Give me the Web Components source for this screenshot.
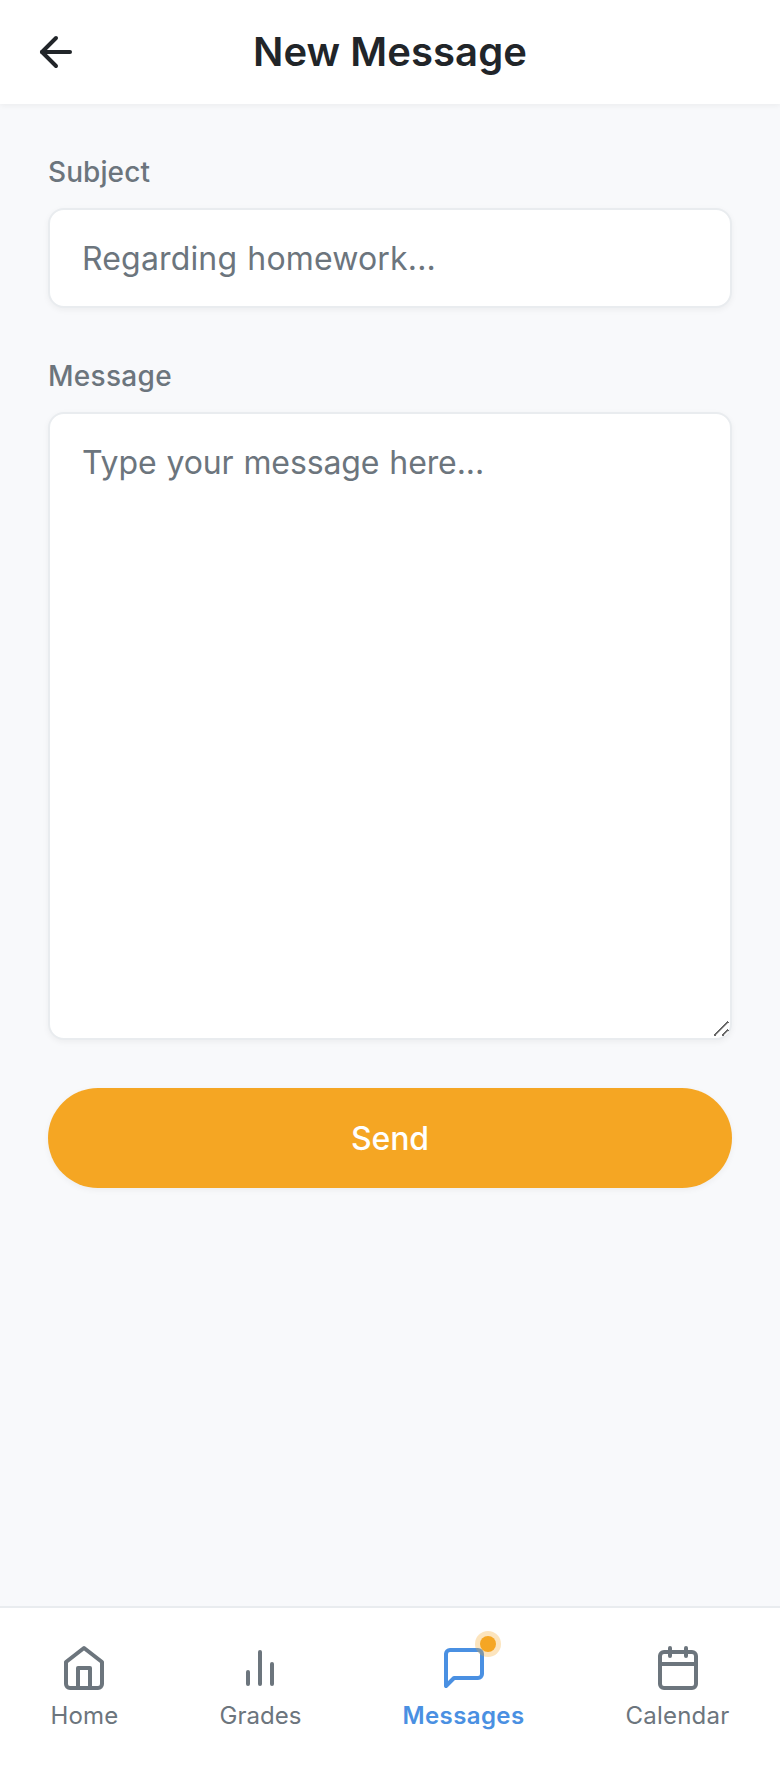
<!DOCTYPE html>
<html lang="en">
<head>
<meta charset="utf-8">
<title>New Message</title>
<style>
  html, body { margin: 0; height: 100%; overflow: hidden; }
  body {
    font-family: "Inter", sans-serif;
    color: #212529;
    --bg: #f8f9fb;
    --card: #fff;
    --line: #e9ecef;
    --muted: #6c757d;
    --accent: #f5a623;
    --primary: #4a90e2;
    --shadow: 0 1px 3px rgba(0, 0, 0, 0.05);
  }
</style>
</head>
<body>
<message-app>
  <app-header slot="header" style="letter-spacing: 0.035px">New Message</app-header>
  <form-field label="Subject" style="letter-spacing: 0.04px"><text-box style="letter-spacing: 0.08px">Regarding homework...</text-box></form-field>
  <form-field label="Message" style="letter-spacing: 0.15px"><text-box multiline style="letter-spacing: -0.05px">Type your message here...</text-box></form-field>
  <send-button style="letter-spacing: -0.06px">Send</send-button>
  <tab-bar slot="footer">
    <tab-item icon="home" style="letter-spacing: 0.09px">Home</tab-item>
    <tab-item icon="chart" style="letter-spacing: 0.02px">Grades</tab-item>
    <tab-item icon="message" active badge style="letter-spacing: 0.195px">Messages</tab-item>
    <tab-item icon="calendar" style="letter-spacing: 0.11px">Calendar</tab-item>
  </tab-bar>
</message-app>
<script>
const ICONS = {
  back: '<path d="M19 12H5"/><path d="M12 19l-7-7 7-7"/>',
  home: '<path d="M3 9l9-7 9 7v11a2 2 0 0 1-2 2H5a2 2 0 0 1-2-2z"/><path d="M9 22V12h6v10"/>',
  chart: '<path d="M18 20V10"/><path d="M12 20V4"/><path d="M6 20v-6"/>',
  message: '<path d="M21 15a2 2 0 0 1-2 2H7l-4 4V5a2 2 0 0 1 2-2h14a2 2 0 0 1 2 2z"/>',
  calendar: '<rect x="3" y="4" width="18" height="18" rx="2" ry="2"/><path d="M16 2v4"/><path d="M8 2v4"/><path d="M3 10h18"/>'
};
const icon = name => `<svg width="24" height="24" viewBox="0 0 24 24" fill="none" stroke="currentColor" stroke-width="2" stroke-linecap="round" stroke-linejoin="round" aria-hidden="true">${ICONS[name]}</svg>`;

function define(name, render) {
  customElements.define(name, class extends HTMLElement {
    constructor() {
      super();
      this.attachShadow({ mode: 'open' }).innerHTML = render(this);
    }
  });
}

// The phone screen is laid out at 390x884 and shown at twice its size.
define('message-app', () => `
  <style>
    :host { display: flex; flex-direction: column; width: 390px; height: 884px; background: var(--bg); transform: scale(2); transform-origin: 0 0; }
    main { flex: 1; display: flex; flex-direction: column; gap: 24px; padding: 24px; box-sizing: border-box; }
  </style>
  <slot name="header"></slot>
  <main><slot></slot></main>
  <slot name="footer"></slot>`);

define('app-header', () => `
  <style>
    :host { display: grid; grid-template-columns: 24px 1fr 24px; align-items: center; height: 52px; box-sizing: border-box; padding: 0 16px; background: var(--card); box-shadow: var(--shadow); }
    svg { display: block; }
    h1 { margin: 0; font-size: 20px; line-height: 28px; font-weight: 600; text-align: center; }
  </style>
  ${icon('back')}<h1><slot></slot></h1>`);

define('form-field', el => `
  <style>
    :host { display: flex; flex-direction: column; gap: 8px; }
    .label { font-size: 14px; line-height: 20px; font-weight: 500; color: var(--muted); }
  </style>
  <div class="label">${el.getAttribute('label')}</div>
  <slot></slot>`);

define('text-box', () => `
  <style>
    :host { display: block; box-sizing: border-box; padding: 12px 16px; border: 1px solid var(--line); border-radius: 8px; background: var(--card); box-shadow: var(--shadow); font-size: 16px; line-height: 24px; word-spacing: 0.5px; color: var(--muted); }
    :host([multiline]) { height: 314px; resize: vertical; overflow: auto; }
  </style>
  <slot></slot>`);

define('send-button', () => `
  <style>
    :host { display: block; }
    button { display: block; width: 100%; height: 50px; padding: 0; border: 0; border-radius: 25px; background: var(--accent); color: #fff; font: 500 16px/24px "Inter", sans-serif; letter-spacing: inherit; box-shadow: var(--shadow); }
  </style>
  <button type="button"><slot></slot></button>`);

define('tab-bar', () => `
  <style>
    :host { display: flex; justify-content: space-around; align-items: flex-start; height: 81px; box-sizing: border-box; padding-top: 18px; border-top: 1px solid var(--line); background: var(--card); }
  </style>
  <slot></slot>`);

define('tab-item', el => `
  <style>
    :host { display: flex; flex-direction: column; align-items: center; gap: 3px; font-size: 12px; line-height: 18px; color: var(--muted); }
    :host([active]) { color: var(--primary); font-weight: 600; }
    .icon { position: relative; width: 24px; height: 24px; }
    svg { display: block; }
    .badge { position: absolute; top: -4px; right: -4px; width: 8px; height: 8px; border-radius: 50%; background: var(--accent); box-shadow: 0 0 0 2.5px rgba(245, 166, 35, 0.3); }
  </style>
  <div class="icon">${icon(el.getAttribute('icon'))}${el.hasAttribute('badge') ? '<div class="badge"></div>' : ''}</div>
  <span><slot></slot></span>`);
</script>
</body>
</html>
